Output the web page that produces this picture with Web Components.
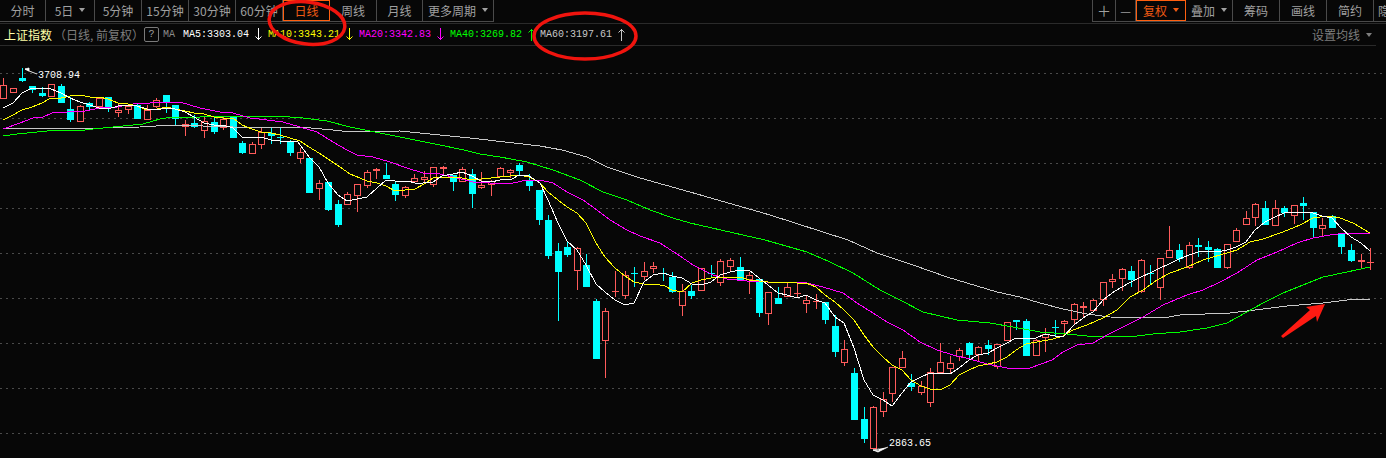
<!DOCTYPE html>
<html lang="zh">
<head>
<meta charset="UTF-8">
<title>上证指数 日线</title>
<style>
  html, body { margin: 0; background: #070707; }
  body { font-family: "Noto Sans CJK SC", "Liberation Sans", sans-serif; width: 1386px; height: 458px; overflow: hidden; position: relative; }
</style>
</head>
<body>
<kline-view>
  <kline-toolbar slot="toolbar">
    <kline-tab>分时</kline-tab>
    <kline-tab w="49" menu>5日</kline-tab>
    <kline-tab w="47">5分钟</kline-tab>
    <kline-tab w="47">15分钟</kline-tab>
    <kline-tab w="47">30分钟</kline-tab>
    <kline-tab w="47">60分钟</kline-tab>
    <kline-tab w="47" active>日线</kline-tab>
    <kline-tab w="47">周线</kline-tab>
    <kline-tab w="46">月线</kline-tab>
    <kline-tab w="71" menu>更多周期</kline-tab>
    <kline-tab slot="right" w="23" big>＋</kline-tab>
    <kline-tab slot="right" w="20">—</kline-tab>
    <kline-tab slot="right" w="50" menu active>复权</kline-tab>
    <kline-tab slot="right" w="47" menu>叠加</kline-tab>
    <kline-tab slot="right" w="47">筹码</kline-tab>
    <kline-tab slot="right" w="47">画线</kline-tab>
    <kline-tab slot="right" w="47">简约</kline-tab>
    <kline-tab slot="right" w="12" clip>隐</kline-tab>
  </kline-toolbar>
  <kline-legend slot="legend">
    <kline-ma color="#ffffff" dir="down" w="85">MA5:3303.04</kline-ma>
    <kline-ma color="#ffff00" dir="down" w="91">MA10:3343.21</kline-ma>
    <kline-ma color="#ff00ff" dir="down" w="91">MA20:3342.83</kline-ma>
    <kline-ma color="#00ff00" dir="up" w="90">MA40:3269.82</kline-ma>
    <kline-ma color="#c8c8c8" dir="up" w="100">MA60:3197.61</kline-ma>
  </kline-legend>
  <kline-chart slot="chart"></kline-chart>
</kline-view>

<script>
// [x, up?, high, bodyTop, bodyBottom, low] read off the picture
const CANDLES = [
  [3,1,78,85,99,99],[13,1,88,88,93,93],[22,0,68,78,81,82],[32,0,86,86,90,93],[42,0,87,93,96,97],
  [51,1,84,84,97,97],[61,0,84,86,103,103],[70,0,97,109,120,122],[80,1,105,106,122,122],[89,0,102,103,107,110],
  [99,1,97,98,107,108],[108,0,97,97,108,112],[118,1,103,110,113,117],[128,1,105,106,110,114],[137,0,104,105,119,119],
  [147,1,105,110,120,120],[156,1,98,100,107,108],[166,0,95,95,102,113],[175,0,105,105,119,125],[185,1,120,124,127,136],
  [194,0,115,123,127,128],[204,1,117,121,131,138],[214,0,117,122,132,134],[223,1,117,119,128,130],[233,0,117,117,138,138],
  [242,0,141,143,153,154],[252,1,142,144,154,154],[261,1,127,132,145,149],[271,0,128,133,136,144],[280,0,128,137,138,144],
  [290,0,140,142,153,156],[300,1,148,152,159,163],[309,0,158,158,193,193],[319,1,180,183,189,200],[328,0,182,182,210,211],
  [338,0,200,204,225,227],[347,1,192,194,205,205],[357,1,184,184,196,212],[367,1,170,172,186,188],[376,1,168,169,171,179],
  [386,0,163,175,179,179],[395,0,182,184,195,201],[405,1,186,187,196,198],[414,1,174,178,182,182],[424,1,171,177,180,183],
  [433,1,167,167,185,187],[443,1,166,167,169,175],[453,0,175,175,182,191],[462,1,167,169,182,182],[472,0,169,174,194,208],
  [481,1,172,185,188,189],[491,1,180,181,185,196],[500,1,167,168,177,177],[510,1,169,170,173,178],[519,0,163,165,171,175],
  [529,0,174,181,186,191],[539,0,190,190,220,225],[548,0,215,220,256,259],[558,0,243,251,272,321],[567,0,241,247,255,257],
  [577,1,247,248,271,290],[586,0,254,265,287,287],[596,0,299,301,359,359],[605,1,308,311,341,378],[615,1,271,291,292,297],
  [625,1,271,275,296,299],[634,0,267,273,274,287],[644,1,262,271,277,280],[653,1,262,266,269,273],[663,0,268,273,274,281],
  [672,0,272,277,292,293],[682,1,284,291,306,316],[691,0,285,291,296,299],[701,1,268,268,291,291],[711,0,265,273,274,277],
  [720,1,259,261,283,286],[730,1,258,260,267,272],[740,0,257,267,280,280],[749,1,272,275,280,294],[759,0,279,279,313,317],
  [768,1,292,292,314,325],[778,0,287,298,304,304],[787,1,282,287,297,297],[797,1,284,293,294,298],[806,1,295,300,304,313],
  [816,1,294,301,302,309],[825,0,302,302,320,324],[835,0,315,326,352,357],[844,1,340,349,363,366],[854,0,368,373,420,420],
  [864,0,407,419,439,443],[873,1,406,407,449,449],[883,1,392,399,412,417],[892,1,367,367,394,402],[902,1,351,358,368,368],
  [911,0,374,383,387,391],[921,1,381,386,393,395],[930,1,368,372,403,407],[940,1,343,362,373,373],[950,1,356,363,369,373],
  [959,1,348,350,357,361],[969,0,342,343,355,358],[978,1,346,347,355,362],[988,0,340,345,349,355],[997,1,344,344,367,369],
  [1007,1,322,322,341,341],[1016,0,320,320,322,330],[1026,0,319,321,356,356],[1036,1,339,340,356,356],[1045,1,328,334,338,352],
  [1055,0,320,327,328,337],[1064,1,320,321,324,333],[1074,1,303,304,320,324],[1083,1,302,306,308,317],[1093,1,299,300,311,311],
  [1103,1,282,282,300,306],[1112,1,274,279,282,288],[1122,1,268,269,279,291],[1131,0,266,271,280,287],[1141,1,259,260,292,293],
  [1150,0,265,273,274,285],[1160,1,258,258,288,300],[1169,1,226,250,258,258],[1179,0,244,250,259,262],[1189,1,242,245,268,269],
  [1198,0,238,245,247,257],[1208,0,241,247,250,262],[1217,0,248,249,268,268],[1227,1,244,244,268,269],[1236,1,228,230,242,242],
  [1246,1,211,218,225,225],[1255,1,203,204,218,226],[1265,0,201,208,225,225],[1275,1,200,208,226,226],[1284,0,206,208,213,217],
  [1294,1,205,205,216,224],[1303,0,197,203,206,220],[1313,0,212,212,228,238],[1322,1,218,225,229,237],[1332,0,215,216,228,228],
  [1341,0,234,234,247,254],[1351,0,244,250,261,262],[1361,1,254,260,262,268],[1370,1,248,262,263,270]
];

const LINES = {
  "#c8c8c8": "3,128 37,128 103,128 140,127 173,125 233,127 300,127 333,130 350,132 400,131 470,138 540,146 562,150 587,157 607,167 640,178 690,192 770,215 848,240 877,253 913,265 947,277 997,292 1020,297 1040,303 1063,309 1087,314 1110,317 1163,318 1180,315 1230,313 1247,311 1287,306 1323,303 1347,300 1370,299",
  "#00ff00": "3,136 17,134 37,132 57,130 85,130 93,129 103,128 123,126 143,124 160,119 173,117 200,117 220,116 277,116 303,118 327,121 350,127 400,137 430,143 464,150 480,154 500,157 527,162 553,170 580,180 603,192 627,200 650,210 673,218 690,223 765,240 807,252 830,262 853,273 880,290 900,300 923,312 957,320 990,323 1013,327 1040,332 1067,334 1087,336 1117,337 1137,336 1153,334 1180,332 1207,328 1227,323 1247,312 1263,303 1283,293 1303,285 1323,277 1347,272 1370,267",
  "#ff00ff": "3,129 20,123 33,118 43,117 52,113 67,112 85,111 100,108 117,107 133,104 150,103 180,102 200,108 220,112 233,113 250,118 267,120 283,122 300,127 317,132 333,142 347,150 357,155 373,157 390,162 407,168 423,173 440,174 457,178 473,182 490,183 513,183 527,180 540,180 553,183 567,192 583,200 597,210 610,220 627,230 640,236 660,243 680,256 693,265 713,275 727,279 747,281 767,282 787,282 807,283 823,287 843,293 857,303 873,313 887,322 903,330 920,342 937,350 953,355 970,359 987,364 1007,368 1030,368 1052,360 1063,352 1077,345 1093,343 1107,335 1127,325 1143,317 1163,305 1187,295 1203,290 1220,282 1237,273 1257,260 1277,252 1297,243 1313,238 1330,235 1347,233 1370,234",
  "#ffff00": "3,120 13,115 22,110 32,107 42,103 51,98 61,98 70,96 80,95 90,97 99,97 108,99 118,103 128,104 137,106 147,110 157,109 167,107 175,109 185,111 194,113 204,114 214,117 223,118 233,118 242,125 252,129 261,132 271,133 280,135 290,138 300,141 309,147 319,153 328,159 340,167 350,174 360,178 367,181 377,183 386,186 395,191 405,190 415,189 424,184 433,178 443,177 453,177 462,178 472,180 481,179 491,178 500,177 510,176 519,175 529,177 539,182 548,192 558,200 567,207 577,213 586,223 596,243 605,257 615,268 625,276 634,282 644,284 655,284 665,286 672,290 682,292 692,283 701,280 711,278 720,277 730,277 740,277 749,280 759,281 768,282 778,283 787,282 797,283 806,283 816,287 825,295 835,302 844,310 854,320 864,335 873,347 883,357 892,365 902,370 911,380 921,386 930,389 940,390 950,385 959,375 969,370 978,366 988,364 997,362 1007,357 1016,350 1026,344 1037,342 1053,339 1063,336 1073,330 1087,325 1103,318 1117,310 1130,297 1143,290 1157,280 1170,273 1187,267 1203,260 1220,255 1237,250 1250,242 1263,239 1283,232 1300,225 1313,218 1327,216 1340,218 1353,223 1370,233",
  "#ffffff": "3,108 13,103 22,93 32,88 42,88 51,89 61,93 70,98 80,102 90,105 99,108 108,109 118,106 128,105 137,106 147,109 156,110 166,108 175,109 185,112 194,117 204,123 214,125 223,125 233,128 242,137 252,137 261,137 271,140 280,141 290,141 298,142 309,157 319,167 328,183 338,195 347,201 357,199 367,197 377,188 386,180 395,181 408,181 415,183 423,183 433,182 442,176 453,174 462,172 472,176 481,181 491,182 500,180 512,179 519,175 529,176 540,183 548,200 558,223 567,241 577,250 586,265 596,284 605,292 615,300 625,305 634,303 644,282 653,275 663,273 672,276 682,278 692,284 701,285 711,282 720,275 730,272 740,270 749,270 759,278 768,285 778,293 787,295 797,298 806,295 816,300 825,303 835,317 844,323 854,348 864,380 873,395 883,400 892,406 902,393 911,382 921,377 930,373 940,373 950,374 959,368 969,360 978,355 988,353 997,348 1007,343 1016,338 1026,338 1036,338 1045,334 1055,336 1064,336 1074,325 1083,318 1093,312 1103,300 1112,293 1122,287 1131,282 1141,277 1150,273 1160,268 1169,264 1179,259 1189,255 1198,252 1208,251 1217,252 1227,250 1236,247 1246,242 1255,230 1265,222 1275,217 1284,213 1294,212 1303,212 1313,213 1322,216 1332,218 1341,228 1351,237 1361,243 1370,251"
};

class KlineView extends HTMLElement {
  constructor() {
    super();
    this.attachShadow({ mode: "open" }).innerHTML = `
      <style>
        :host { display: flex; flex-direction: column; width: 1386px; height: 458px; position: relative; color: #b4b4b4; }
        .notes { position: absolute; left: 0; top: 0; pointer-events: none; }
      </style>
      <slot name="toolbar"></slot>
      <slot name="legend"></slot>
      <slot name="chart"></slot>
      <svg class="notes" width="1386" height="458" fill="none" stroke="#f0140e" stroke-width="3.5">
        <ellipse cx="307" cy="23" rx="38" ry="21" transform="rotate(7 307 23)"/>
        <ellipse cx="585" cy="36" rx="51" ry="23"/>
        <path d="M1281 336L1310 310L1306 307L1325 304L1317 322L1316 316L1283 338Z" fill="#ff1a12" stroke="none"/>
      </svg>`;
  }
}

class KlineToolbar extends HTMLElement {
  constructor() {
    super();
    this.attachShadow({ mode: "open" }).innerHTML = `
      <style>
        :host { display: flex; justify-content: space-between; height: 22px; flex: none; margin-bottom: 1px; }
        div { display: flex; box-sizing: border-box; height: 22px; border-bottom: 1px solid #4a4a4a; }
        .r { border-left: 1px solid #4a4a4a; }
      </style>
      <div><slot></slot></div>
      <div class="r"><slot name="right"></slot></div>`;
  }
}

class KlineTab extends HTMLElement {
  constructor() {
    super();
    this.attachShadow({ mode: "open" }).innerHTML = `
      <style>
        :host { display: flex; align-items: center; justify-content: center; box-sizing: border-box; width: 46px; height: 21px; padding-bottom: 1px;
          border-right: 1px solid #4a4a4a; font: 12px "Noto Sans CJK SC", sans-serif; color: #a0a0a0; gap: 6px; overflow: hidden; white-space: nowrap; }
        :host([active]) { color: #f05a14; outline: 1px solid #ff6010; outline-offset: -1px; border-right: 0; }
        :host([clip]) { border-right: 0; justify-content: flex-start; padding-left: 4px; }
        :host([big]) { font-size: 14px; }
        i { display: none; width: 0; height: 0; border: 3px solid transparent; border-top: 4px solid currentColor; border-bottom: 0; }
        :host([menu]) i { display: block; }
      </style>
      <slot></slot><i></i>`;
    const w = this.getAttribute("w");
    if (w) this.style.width = w + "px";
  }
}

class KlineLegend extends HTMLElement {
  constructor() {
    super();
    this.attachShadow({ mode: "open" }).innerHTML = `
      <style>
        :host { display: block; flex: none; border-top: 1px solid #2a2a2a; font-size: 12px; white-space: nowrap; }
        .bar { display: flex; align-items: center; height: 22px; box-sizing: border-box; width: 1376px; border-bottom: 1px solid #2a2a2a; }
        .name { color: #ffffa8; margin-left: 4px; width: 50px; }
        .sub { color: #7e7e7e; width: 90px; }
        .help { box-sizing: border-box; width: 15px; height: 15px; border: 1px solid #7a7a7a; border-radius: 2px; color: #a0a0a0;
          font: 10px "Liberation Mono", monospace; text-align: center; line-height: 13px; }
        .ma { color: #8a8a8a; font: 10px "Liberation Mono", monospace; margin: 0 8px 0 4px; width: 12px; }
        .set { margin-left: auto; color: #7e7e7e; display: flex; align-items: center; gap: 6px; margin-right: 4px; }
        .set i { width: 0; height: 0; border: 3px solid transparent; border-top: 4px solid currentColor; border-bottom: 0; }
      </style>
      <div class="bar">
        <span class="name">上证指数</span>
        <span class="sub">（日线, 前复权）</span>
        <span class="help">?</span>
        <span class="ma">MA</span>
        <slot></slot>
        <span class="set">设置均线<i></i></span>
      </div>`;
  }
}

class KlineMa extends HTMLElement {
  constructor() {
    super();
    const c = this.getAttribute("color");
    const up = this.getAttribute("dir") === "up";
    this.attachShadow({ mode: "open" }).innerHTML = `
      <style>
        :host { display: flex; align-items: center; gap: 6px; box-sizing: border-box; width: ${this.getAttribute("w")}px;
          font: 10px "Liberation Mono", monospace; color: ${c}; }
        svg { flex: none; }
      </style>
      <slot></slot>
      <svg width="7" height="13" viewBox="0 0 7 13" fill="none" stroke="${c}">
        ${up ? '<path d="M3.5 13V1M.5 4.5l3-3 3 3"/>' : '<path d="M3.5 0v12M.5 8.5l3 3 3-3"/>'}
      </svg>`;
  }
}

class KlineChart extends HTMLElement {
  constructor() {
    super();
    let grid = "", bars = "", lines = "";
    for (let y = 73; y < 458; y += 45) {
      grid += `<path d="M0 ${y + .5}H1386" stroke="#4a4a4a" stroke-dasharray="2 4"/>`;
    }
    for (const [x, up, hi, top, bot, lo] of CANDLES) {
      const c = up ? "#ff5b5b" : "#00ffff";
      const cx = x + .5;
      bars += `<path d="M${cx} ${hi}V${top}M${cx} ${bot}V${lo}" stroke="${c}"/>`;
      if (bot - top <= 2) {
        bars += `<rect x="${x - 3}" y="${top}" width="7" height="${Math.max(bot - top, 1)}" fill="${c}"/>`;
      } else if (up) {
        bars += `<rect x="${x - 2.5}" y="${top + .5}" width="6" height="${bot - top - 1}" fill="#070707" stroke="${c}"/>`;
      } else {
        bars += `<rect x="${x - 3}" y="${top}" width="7" height="${bot - top}" fill="${c}"/>`;
      }
    }
    for (const [c, pts] of Object.entries(LINES)) {
      lines += `<polyline points="${pts}" fill="none" stroke="${c}" shape-rendering="crispEdges"/>`;
    }
    this.attachShadow({ mode: "open" }).innerHTML = `
      <style>
        :host { display: block; flex: 1; }
        svg { display: block; }
        text { font: 10px "Liberation Mono", monospace; fill: #ffffff; }
      </style>
      <svg width="1386" height="412" viewBox="0 46 1386 412">
        ${grid}${bars}${lines}
        <path d="M25 69l4 2 8 3M25 69l4 -1v3z" stroke="#fff" fill="#fff" stroke-width=".8"/>
        <text x="38" y="78">3708.94</text>
        <path d="M873 450l5 2 10-5M873 450l6 -1v2z" stroke="#fff" fill="#fff" stroke-width=".8"/>
        <text x="889" y="446">2863.65</text>
      </svg>`;
  }
}

customElements.define("kline-view", KlineView);
customElements.define("kline-toolbar", KlineToolbar);
customElements.define("kline-tab", KlineTab);
customElements.define("kline-legend", KlineLegend);
customElements.define("kline-ma", KlineMa);
customElements.define("kline-chart", KlineChart);
</script>
</body>
</html>
